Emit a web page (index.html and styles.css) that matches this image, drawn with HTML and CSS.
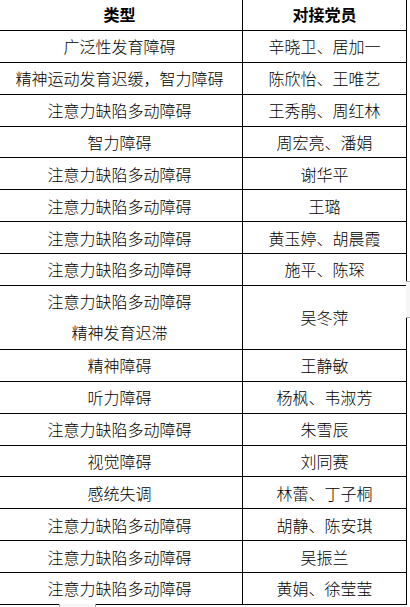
FILE: index.html
```html
<!DOCTYPE html>
<html lang="zh-CN">
<head>
<meta charset="utf-8">
<title>类型与对接党员</title>
<link rel="stylesheet" href="styles.css">
</head>
<body>
<table class="sheet">
  <colgroup><col class="c1"><col class="c2"></colgroup>
  <thead>
    <tr><th>类型</th><th>对接党员</th></tr>
  </thead>
  <tbody>
    <tr><td>广泛性发育障碍</td><td>辛晓卫、居加一</td></tr>
    <tr><td>精神运动发育迟缓，智力障碍</td><td>陈欣怡、王唯艺</td></tr>
    <tr><td>注意力缺陷多动障碍</td><td>王秀鹃、周红林</td></tr>
    <tr><td>智力障碍</td><td>周宏亮、潘娟</td></tr>
    <tr><td>注意力缺陷多动障碍</td><td>谢华平</td></tr>
    <tr><td>注意力缺陷多动障碍</td><td>王璐</td></tr>
    <tr><td>注意力缺陷多动障碍</td><td>黄玉婷、胡晨霞</td></tr>
    <tr><td>注意力缺陷多动障碍</td><td>施平、陈琛</td></tr>
    <tr class="double"><td>注意力缺陷多动障碍<br>精神发育迟滞</td><td>吴冬萍</td></tr>
    <tr><td>精神障碍</td><td>王静敏</td></tr>
    <tr><td>听力障碍</td><td>杨枫、韦淑芳</td></tr>
    <tr><td>注意力缺陷多动障碍</td><td>朱雪辰</td></tr>
    <tr><td>视觉障碍</td><td>刘同赛</td></tr>
    <tr><td>感统失调</td><td>林蕾、丁子桐</td></tr>
    <tr><td>注意力缺陷多动障碍</td><td>胡静、陈安琪</td></tr>
    <tr><td>注意力缺陷多动障碍</td><td>吴振兰</td></tr>
    <tr><td>注意力缺陷多动障碍</td><td>黄娟、徐莹莹</td></tr>
  </tbody>
</table>
<div class="edge-tab"></div>
<div class="bottom-tab"></div>
</body>
</html>
```
FILE: styles.css
```css
html, body {
  margin: 0;
  padding: 0;
  background: #ffffff;
  overflow: hidden;
}
body {
  width: 410px;
  height: 607px;
  position: relative;
  font-family: "Noto Sans CJK SC", "Noto Sans", sans-serif;
  font-size: 16px;
  color: #000;
}
.sheet {
  border-collapse: collapse;
  table-layout: fixed;
  width: 410px;
  margin-left: -4px;
  margin-top: -2px;
}
.c1 { width: 246px; }
.c2 { width: 164px; }
.sheet th,
.sheet td {
  border: 1px solid #000;
  padding: 0;
  height: 30.875px;
  text-align: center;
  vertical-align: middle;
  line-height: 20px;
  font-weight: 300;
  white-space: nowrap;
}
.sheet th {
  font-weight: 700;
}
.sheet tr.double td {
  height: 62px;
  line-height: 31.5px;
}
.edge-tab {
  position: absolute;
  left: 406px;
  top: 281px;
  width: 4px;
  height: 37px;
  background: #f6f6f6;
  border-top: 1px solid #a8a8a8;
  border-bottom: 1px solid #a8a8a8;
  box-sizing: border-box;
}
.bottom-tab {
  position: absolute;
  left: 59px;
  top: 604px;
  width: 37px;
  height: 3px;
  background: #f6f6f6;
  border-left: 1px solid #a8a8a8;
  border-right: 1px solid #a8a8a8;
  box-sizing: border-box;
}
```
